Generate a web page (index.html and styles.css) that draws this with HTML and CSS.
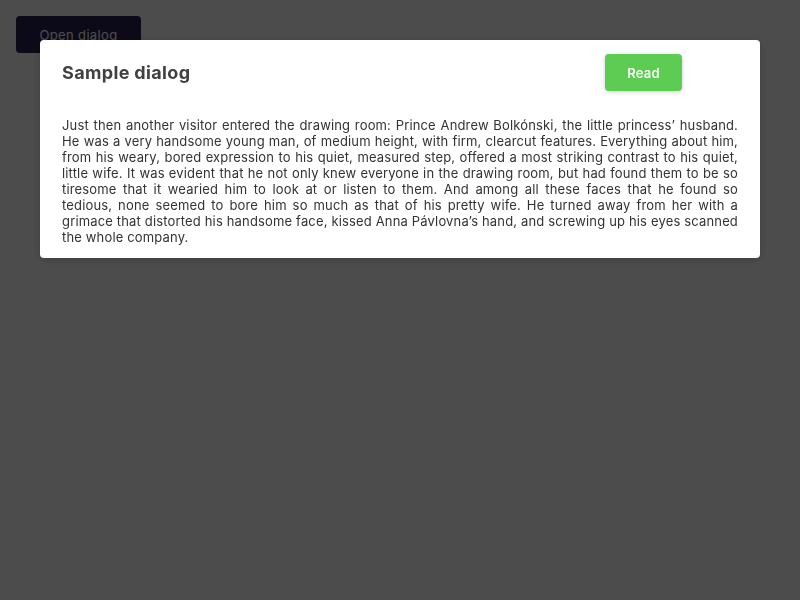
FILE: index.html
```html
<!DOCTYPE html>
<html>
<head>
<meta charset="utf-8">
<link rel="stylesheet" href="styles.css">
</head>
<body>
<button class="open-btn">Open dialog</button>
<div class="overlay">
  <div class="dialog">
    <div class="dialog-header">
      <h2 class="dialog-title">Sample dialog</h2>
      <button class="read-btn">Read</button>
    </div>
    <p class="dialog-body">Just then another visitor entered the drawing room: Prince Andrew Bolkónski, the little princess’ husband. He was a very handsome young man, of medium height, with firm, clearcut features. Everything about him, from his weary, bored expression to his quiet, measured step, offered a most striking contrast to his quiet, little wife. It was evident that he not only knew everyone in the drawing room, but had found them to be so tiresome that it wearied him to look at or listen to them. And among all these faces that he found so tedious, none seemed to bore him so much as that of his pretty wife. He turned away from her with a grimace that distorted his handsome face, kissed Anna Pávlovna’s hand, and screwing up his eyes scanned the whole company.</p>
  </div>
</div>
</body>
</html>
```

FILE: styles.css
```css
html, body {
  margin: 0;
  padding: 0;
  width: 800px;
  height: 600px;
  background: #ffffff;
  font-family: Inter, "Noto Sans", sans-serif;
}
body {
  padding: 16px;
  box-sizing: border-box;
}
.open-btn {
  width: 125px;
  height: 37px;
  border: none;
  border-radius: 4px;
  background: #2a2355;
  color: #ffffff;
  font-family: Inter, sans-serif;
  font-size: 13px;
  font-weight: 400;
  letter-spacing: 0.35px;
  padding: 0;
}
.overlay {
  position: fixed;
  inset: 0;
  background: rgba(0, 0, 0, 0.7);
  display: flex;
  justify-content: center;
  align-items: flex-start;
  padding-top: 40px;
}
.dialog {
  width: 720px;
  box-sizing: border-box;
  background: #ffffff;
  border-radius: 4px;
  box-shadow: 0 2px 8px rgba(0, 0, 0, 0.2);
  padding: 14px 22px 13px;
}
.dialog-header {
  display: flex;
  align-items: center;
  justify-content: space-between;
  height: 37px;
  padding-right: 56px;
}
.dialog-title {
  margin: 0;
  font-size: 18px;
  font-weight: 700;
  letter-spacing: 0.35px;
  color: #404040;
}
.read-btn {
  width: 77px;
  height: 37px;
  border: none;
  border-radius: 4px;
  background: #5ccd52;
  color: #ffffff;
  font-family: Inter, sans-serif;
  font-size: 13px;
  font-weight: 600;
  letter-spacing: 0.2px;
  box-shadow: 0 1px 4px rgba(0, 0, 0, 0.2);
  padding: 0;
}
.dialog-body {
  margin: 26px 0 0;
  font-size: 13px;
  line-height: 16px;
  letter-spacing: 0.155px;
  color: #333333;
  text-align: justify;
}
```
